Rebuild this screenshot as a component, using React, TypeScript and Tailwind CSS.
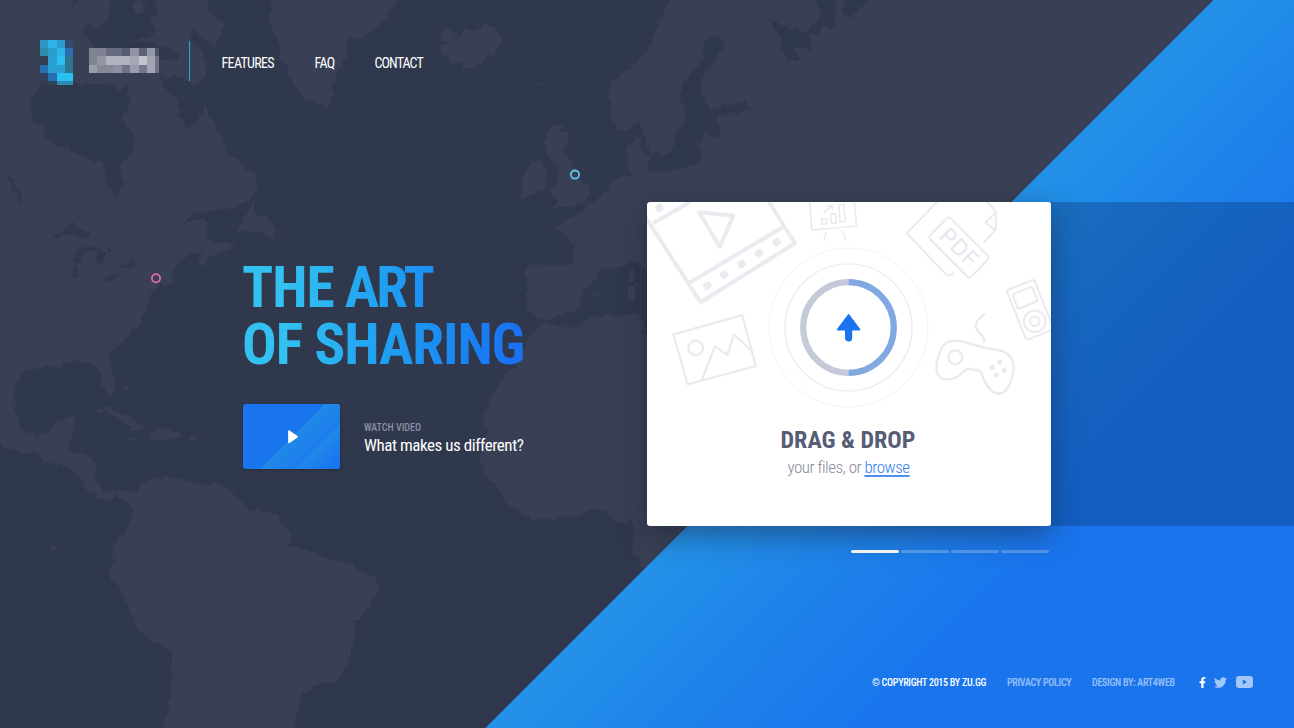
import React from "react";
import { FaFacebookF, FaTwitter } from "react-icons/fa";

const LOGO_MARK: string[][] = [
  ["#2d96c3", "#2bb4e8", "#2c9aca", "#304a70"],
  ["#2d8bae", "#2c9bce", "#2bb4e8", "#2a6fae"],
  ["#323c55", "#2c9fd4", "#2bc0f2", "#2d7592"],
  ["#276fab", "#2c9fd4", "#2c9fd4", "#2d7592"],
  ["#31415f", "#276fb2", "#2bc0f2", "#2bc0f2"],
  ["#323a51", "#31455f", "#2d8cae", "#2d8cae"],
];

const LOGO_WORD: string[][] = [
  ["#7e8293", "#7e8293", "#666b7f", "#666b7f", "#565b70", "#8f93a2", "#5c6176", "#9599a7", "#4c5268"],
  ["#7e8293", "#9296a5", "#b0b3be", "#b0b3be", "#b0b3be", "#a5a8b4", "#c3c6ce", "#a0a4b0", "#6f7487"],
  ["#9a9eac", "#858998", "#858998", "#8d91a0", "#6f7487", "#9a9eac", "#747a8c", "#a3a7b3", "#6f7487"],
];

const COASTS = [
  // North and Central America
  "M-20,-20 L110,-20 L109,18 L98,27 L84,25 L80,32 L92,40 L110,46 L128,40 L150,38 L156,30 L150,25 L158,12 L155,-20 L196,-20 L212,14 L224,24 L222,34 L214,47 L206,42 L198,34 L190,29 L192,40 L202,52 L207,66 L204,78 L196,86 L188,80 L176,76 L160,78 L162,86 L170,96 L178,98 L179,116 L188,128 L198,120 L205,106 L212,120 L222,136 L224,150 L240,163 L256,176 L258,190 L250,200 L235,209 L210,210 L195,213 L180,225 L204,217 L208,230 L206,238 L214,242 L226,243 L236,242 L228,250 L212,256 L202,265 L196,260 L206,252 L192,254 L175,265 L172,275 L175,281 L165,285 L152,289 L149,302 L142,315 L138,325 L125,340 L110,352 L109,362 L115,380 L115,393 L110,396 L102,385 L98,368 L88,362 L62,363 L61,370 L45,366 L25,370 L17,380 L14,395 L15,412 L22,430 L35,436 L50,432 L55,421 L76,418 L72,435 L67,451 L85,453 L97,462 L95,480 L105,492 L120,489 L132,493 L136,497 L128,502 L116,494 L110,502 L100,498 L84,487 L82,480 L70,467 L45,462 L34,452 L25,453 L-20,439 Z",
  // Newfoundland
  "M256,197 L244,217 L236,230 L250,233 L262,231 L273,241 L275,228 L266,216 L253,213 Z",
  // Cuba, Hispaniola, Jamaica, Puerto Rico
  "M90,416 L98,410 L108,407 L120,413 L135,421 L148,428 L134,430 L120,420 L105,411 Z",
  "M150,432 L160,428 L172,430 L184,437 L170,439 L152,438 Z",
  "M125,437 L138,438 L132,441 Z M189,437 L200,438 L190,440 Z",
  "M121,386 L129,385 L131,390 Z M137,396 L143,402 L137,400 Z",
  // South America
  "M133,495 L141,484 L162,477 L175,478 L190,483 L205,485 L215,483 L228,488 L240,500 L248,510 L270,511 L283,522 L292,540 L288,545 L300,548 L318,555 L330,561 L350,563 L367,575 L376,577 L378,590 L370,605 L355,622 L353,645 L345,668 L335,681 L320,683 L300,697 L298,715 L286,745 L160,745 L170,700 L172,670 L172,653 L155,642 L140,632 L130,610 L120,590 L110,575 L109,568 L118,560 L111,557 L113,545 L120,538 L130,525 L132,510 L127,498 Z",
  "M50,544 L58,548 L50,551 Z",
  // Greenland
  "M274,-20 L269,22 L278,38 L283,60 L292,82 L305,99 L318,102 L325,110 L332,103 L334,80 L345,58 L347,40 L364,36 L382,24 L390,10 L416,-20 Z",
  // Arctic islands
  "M132,5 L142,0 L146,8 L138,15 L133,12 Z",
  // Iceland
  "M438,38 L446,27 L456,33 L456,40 L464,30 L475,31 L487,25 L496,28 L501,42 L492,55 L471,68 L450,60 L440,48 L450,44 Z",
  "M537,82 L541,83 L540,87 Z M571,102 L574,104 L572,110 Z",
  // Great Britain and Ireland
  "M556,125 L563,125 L560,132 L570,134 L569,142 L563,150 L572,162 L576,176 L589,185 L590,193 L586,203 L570,206 L549,210 L560,200 L551,192 L558,180 L560,168 L555,165 L547,155 L544,140 L548,130 Z",
  "M536,160 L544,163 L546,176 L544,190 L535,193 L522,198 L522,178 L527,166 Z",
  // Europe and Russia
  "M680,-20 L660,20 L650,45 L635,65 L613,80 L609,95 L612,120 L620,131 L630,129 L640,120 L644,135 L650,153 L662,155 L672,150 L676,133 L685,122 L686,112 L680,102 L682,85 L690,72 L703,60 L705,40 L715,35 L725,42 L720,55 L705,72 L701,85 L703,100 L712,109 L728,105 L745,102 L750,108 L735,113 L717,115 L720,140 L713,138 L705,132 L700,145 L702,162 L690,167 L670,171 L655,172 L645,170 L650,158 L640,152 L642,138 L634,140 L626,150 L628,165 L632,175 L610,180 L603,195 L590,203 L580,213 L570,217 L565,222 L552,225 L560,232 L568,236 L573,248 L573,264 L560,266 L530,264 L525,270 L528,285 L526,305 L532,313 L548,320 L560,315 L577,310 L582,290 L595,280 L600,268 L615,270 L633,260 L644,268 L660,280 L1100,280 L1290,-20 Z",
  "M628,270 L634,270 L635,280 L630,281 Z M628,284 L636,284 L635,300 L628,301 Z M594,295 L600,292 L600,297 Z",
  // Africa
  "M535,331 L543,323 L552,326 L575,327 L590,318 L610,315 L640,314 L644,322 L642,332 L660,345 L720,345 L720,610 L650,575 L632,552 L634,530 L632,520 L620,522 L612,520 L605,510 L590,510 L575,517 L560,517 L537,521 L520,513 L505,502 L500,490 L485,475 L480,460 L486,435 L482,418 L495,390 L505,375 L520,362 L526,342 Z",
];

const WATERS = [
  // Hudson Bay and James Bay
  "M42,84 L62,82 L90,84 L112,84 L120,92 L127,84 L130,100 L123,120 L134,136 L133,152 L120,165 L123,185 L116,199 L105,182 L103,163 L85,158 L65,148 L46,141 L43,125 L32,122 L31,100 Z",
  "M84,28 L96,33 L120,40 L150,42 L180,54 L176,62 L140,56 L96,50 Z",
  "M68,-10 L78,-10 L75,12 Z",
  // Great Lakes
  "M52,238 L66,228 L74,222 L80,229 L88,233 L88,240 L72,234 Z",
  "M74,258 L78,248 L92,246 L100,250 L84,252 L78,262 L77,278 L72,278 Z",
  "M98,248 L105,254 L104,266 L96,262 Z M108,246 L114,252 L108,254 Z",
  "M98,281 L110,276 L120,272 L112,280 Z M120,265 L136,262 L134,266 L122,268 Z",
  "M7,176 L14,180 L20,192 L21,204 L14,194 Z",
  // White Sea and Barents coast
  "M766,16 L784,27 L806,31 L818,22 L819,8 L808,-20 L836,-20 L835,30 L824,27 L810,38 L814,52 L802,48 L792,43 L800,62 L790,60 L782,53 L781,37 Z",
  "M848,-20 L843,8 L844,17 L852,20 L858,11 L895,-20 Z",
];

function WorldBackdrop() {
  return (
    <svg className="absolute inset-0 h-full w-full" viewBox="0 0 1294 728" aria-hidden="true">
      <defs>
        <filter id="coast" x="-20" y="-20" width="1334" height="768" filterUnits="userSpaceOnUse" colorInterpolationFilters="sRGB">
          <feTurbulence type="fractalNoise" baseFrequency="0.14" numOctaves="3" seed="7" result="n" />
          <feDisplacementMap in="SourceGraphic" in2="n" scale="8" xChannelSelector="R" yChannelSelector="G" />
        </filter>
        <linearGradient id="slope" gradientUnits="userSpaceOnUse" x1="850" y1="363" x2="1040" y2="553">
          <stop offset="0" stopColor="#2392e8" />
          <stop offset="0.5" stopColor="#1e82ea" />
          <stop offset="1" stopColor="#1a75ed" />
        </linearGradient>
      </defs>
      <g filter="url(#coast)">
        {COASTS.map((d) => (
          <path key={d} d={d} fill="#394055" />
        ))}
        {WATERS.map((d) => (
          <path key={d} d={d} fill="#30384d" />
        ))}
      </g>
      <path d="M1213.5,0 L1294,0 L1294,728 L485.5,728 Z" fill="url(#slope)" />
      <circle cx="575" cy="174.6" r="4.1" fill="none" stroke="#61c5f0" strokeWidth="1.8" />
      <circle cx="156" cy="278.3" r="4.1" fill="none" stroke="#e36db0" strokeWidth="1.8" />
    </svg>
  );
}

function Logo() {
  return (
    <div className="flex items-start">
      <div className="flex h-[45px] w-[33px] flex-col">
        {LOGO_MARK.map((row, r) => (
          <div key={r} className={r === 5 ? "flex h-1" : "flex h-[8.2px]"}>
            {row.map((c, i) => (
              <span key={i} className="h-full flex-1" style={{ backgroundColor: c }} />
            ))}
          </div>
        ))}
      </div>
      <div className="mt-2 ml-4 flex h-[25px] w-[70px] flex-col">
        {LOGO_WORD.map((row, r) => (
          <div key={r} className="flex flex-1">
            {row.map((c, i) => (
              <span key={i} className={i === 8 ? "h-full w-1" : "h-full flex-1"} style={{ backgroundColor: c }} />
            ))}
          </div>
        ))}
      </div>
    </div>
  );
}

function Header() {
  return (
    <header className="flex h-[202px] items-start pt-10 pl-10">
      <Logo />
      <div className="mt-[1px] ml-[30px] h-10 w-px shrink-0 bg-[#22a7e0]" />
      <nav className="mt-[13px] ml-[31.5px] flex text-[14px] leading-5 tracking-[-0.65px] text-white">
        <a className="w-[93px]">FEATURES</a>
        <a className="w-[60px]">FAQ</a>
        <a className="tracking-[-0.9px]">CONTACT</a>
      </nav>
    </header>
  );
}

function VideoThumb() {
  return (
    <div className="h-[65px] w-[97px] overflow-hidden rounded-[3px] shadow-[0_1px_3px_rgba(30,30,40,0.5)]">
      <svg className="block" width="97" height="65" viewBox="0 0 97 65">
        <defs>
          <linearGradient id="band" gradientUnits="userSpaceOnUse" x1="50" y1="32" x2="72" y2="54">
            <stop offset="0" stopColor="#218ae8" />
            <stop offset="1" stopColor="#1b79ed" />
          </linearGradient>
          <linearGradient id="band2" gradientUnits="userSpaceOnUse" x1="74" y1="42" x2="92" y2="60">
            <stop offset="0" stopColor="#218ae8" />
            <stop offset="1" stopColor="#1a75ee" />
          </linearGradient>
        </defs>
        <rect width="97" height="65" fill="#1a74ee" />
        <path d="M17,65 L82,0 H97 V20 L52,65 Z" fill="url(#band)" />
        <path d="M52,65 L97,20 V65 Z" fill="url(#band2)" />
        <path d="M46,27.2 L54,32.7 L46,38.2 Z" fill="#fff" stroke="#fff" strokeWidth="1.8" strokeLinejoin="round" />
      </svg>
    </div>
  );
}

function Hero() {
  return (
    <section className="w-[647px] shrink-0 pt-[57px] pl-[242px]">
      <h1 className="w-[285px] bg-linear-to-r from-[#32c1f0] from-15% to-[#1a72f2] to-95% bg-clip-text text-[57.6px] leading-[57px] font-bold tracking-[-1.1px] whitespace-nowrap text-transparent">
        THE <span className="-ml-px tracking-[-3px]">ART</span>
        <br />
        OF SHARING
      </h1>
      <div className="mt-[31px] ml-px flex">
        <VideoThumb />
        <div className="ml-6 pt-[18px] whitespace-nowrap">
          <p className="text-[10px] leading-3 font-medium text-[#8b90a2]">WATCH VIDEO</p>
          <p className="mt-[1px] text-[17px] leading-5 tracking-[-0.46px] text-white">What makes us different?</p>
        </div>
      </div>
    </section>
  );
}

function CardArt() {
  const holes = [
    [12.3, 5.7],
    [60.3, 83.7],
    [77.3, 72.7],
    [94.7, 62],
    [112, 51.3],
    [129.7, 40.3],
  ];
  return (
    <svg className="block" width="404" height="222" viewBox="0 0 404 222" fill="none">
      <g stroke="#e9ebf0" strokeLinecap="round" strokeLinejoin="round">
        <g strokeWidth="4">
          <path d="M-12,-1 L53.7,100.3 L148,41.3 L122,0" />
          <path d="M43,80.5 L135.7,25.3 M6,21.3 L43,0" strokeLinecap="butt" />
          <path d="M52,10.3 L86.3,13.7 L73,44.7 Z" />
        </g>
        {holes.map(([x, y]) => (
          <rect key={x} x={x - 4} y={y - 3.7} width="8" height="7.4" rx="2.6" fill="#e9ebf0" stroke="none" transform={`rotate(-31 ${x} ${y})`} />
        ))}
        <g strokeWidth="1.6">
          <path d="M162.8,-4 L164.7,28 L209.7,24 L207,-4" />
          <path d="M178.7,30.5 L177.3,38 M195.7,29 L198.4,37" />
          <rect x="174.7" y="17" width="5" height="5" transform="rotate(-4 177 19)" />
          <rect x="184" y="12" width="5" height="9.2" transform="rotate(-4 186 16)" />
          <rect x="192.5" y="2.5" width="5" height="17.5" transform="rotate(-4 195 11)" />
          <path d="M177.3,10.7 L185,3.8 M180,3.6 L185.3,3.6 L185.3,8" />
        </g>
        <g strokeWidth="2.3">
          <path d="M26.3,132.3 L95.3,113.2 L108.7,164 L40.7,182.3 Z" />
          <circle cx="48.7" cy="146" r="7.3" />
          <path d="M54.7,178 L68,144.3 L80.3,153 L87,132.6 L105,149" />
        </g>
        <g strokeWidth="2.1">
          <path d="M290,0 L259.7,31.3 L299.5,72.8 Q301.5,74.5 303.5,73 L307,71.2" />
          <path d="M339.5,-1 L348.8,9.7 V27.6 L337,40.3 M347.7,11.5 L338.4,20.5 L347.7,28" />
          <path d="M304,16.5 L340.5,53.5 Q342.5,55.7 340.3,58 L324.5,74.5 Q322.3,76.5 320.2,74.3 L283.3,37.3 Q281.5,35.2 283.5,33 L299.5,16.5 Q302,14.3 304,16.5 Z" />
          <rect x="-14.8" y="-26.8" width="29.6" height="53.6" rx="2.5" transform="translate(383.2 107.8) rotate(-21.8)" />
          <rect x="-10.6" y="-7.8" width="21.2" height="15.6" rx="2" transform="translate(378 95.8) rotate(-21.8)" />
          <circle cx="387.7" cy="119.3" r="10.8" />
          <circle cx="387.7" cy="119.3" r="4.8" />
        </g>
        <g strokeWidth="2.4">
          <path d="M303,139.3 C294,141 289,158 289.6,168 C290,177.5 300,179 308,176 C314,173.5 318,166.6 322,166.6 C326,168.4 331,167.6 334,169.6 C336,178 342,191 352,191.8 C362,191 367,173 366.4,163 C366,153 357,148.8 350,147.8 C340,147 330,144 321,141 C315,138.5 308,138.5 303,139.3 Z" />
          <circle cx="308.3" cy="155.3" r="7" />
          <path d="M337.3,140 C337,131 328.5,131 328.8,123 C329,119.5 333,115.5 337.3,112.5" />
        </g>
        <g fill="#e9ebf0" stroke="none">
          <circle cx="345.3" cy="165.3" r="2.6" />
          <circle cx="352.7" cy="160.3" r="2.6" />
          <circle cx="349.3" cy="173" r="2.6" />
          <circle cx="357.3" cy="168.3" r="2.6" />
        </g>
      </g>
      <text x="0.5" y="7.8" textAnchor="middle" fill="#e4e7ed" className="font-['Inter',sans-serif] text-[22px] font-normal tracking-[0.6px] [font-stretch:100%]" transform="translate(312 45.3) rotate(45)">
        PDF
      </text>
      <circle cx="201.5" cy="125.5" r="79.5" stroke="#f3f4f6" />
      <circle cx="201.5" cy="125.5" r="63.5" stroke="#e9eaee" strokeWidth="1.2" />
      <path d="M201.5,80.2 A45.3,45.3 0 0 0 201.5,170.8" stroke="#c4cad8" strokeWidth="6.2" />
      <path d="M201.5,80.2 A45.3,45.3 0 0 1 201.5,170.8" stroke="#82a8e1" strokeWidth="6.2" />
      <path d="M201.6,113 L212.4,127.6 H204.3 V136 A2.7,2.7 0 0 1 198.9,136 V127.6 H190.8 Z" fill="#1a73ee" stroke="#1a73ee" strokeWidth="1.8" strokeLinejoin="round" />
    </svg>
  );
}

function DropCard() {
  return (
    <div className="h-[323.5px] w-[404px] shrink-0 overflow-hidden rounded-[3px] bg-white text-center shadow-[0_8px_30px_rgba(25,29,48,0.5)]">
      <CardArt />
      <h2 className="pr-[2px] text-[24px] leading-[33px] font-bold text-[#565d75]">DRAG &amp; DROP</h2>
      <p className="pr-px text-[17px] leading-[21px] font-light tracking-[-0.5px] text-[#858a9b]">
        your files, or{" "}
        <a className="text-[#2f7eee] underline decoration-[#4a90f2] decoration-[1.5px] underline-offset-[2px]">browse</a>
      </p>
    </div>
  );
}

function Pager() {
  return (
    <div className="flex gap-[2px] pt-[24.5px] pl-[851px]">
      <span className="h-[3px] w-12 rounded-full bg-white" />
      <span className="h-[3px] w-12 rounded-full bg-white/25" />
      <span className="h-[3px] w-12 rounded-full bg-white/25" />
      <span className="h-[3px] w-12 rounded-full bg-white/25" />
    </div>
  );
}

function Footer() {
  return (
    <footer className="mt-auto flex h-[52px] items-start pl-[872px] text-[10px] leading-[13px] font-medium tracking-[-0.27px] whitespace-nowrap text-white/55">
      <span className="w-[135px] text-white">© COPYRIGHT 2015 BY ZU.GG</span>
      <a className="w-[85px]">PRIVACY POLICY</a>
      <a className="w-[107px]">DESIGN BY: ART4WEB</a>
      <FaFacebookF className="mt-[1px] h-[11px] w-[7px] text-white" />
      <FaTwitter className="ml-[7px] h-[13px] w-[15px] text-white/60" />
      <svg className="ml-[8px]" width="17" height="12" viewBox="0 0 17 12">
        <path fillRule="evenodd" d="M3,0 H14 Q17,0 17,3 V9 Q17,12 14,12 H3 Q0,12 0,9 V3 Q0,0 3,0 Z M6.8,3.6 V8.6 L11,6.1 Z" fill="#fff" fillOpacity="0.6" />
      </svg>
    </footer>
  );
}

export default function App() {
  return (
    <div className="relative h-[728px] w-[1294px] overflow-hidden bg-[#30384d] font-['Roboto_Condensed','Roboto',sans-serif] [font-stretch:75%]">
      <WorldBackdrop />
      <div className="relative flex h-full flex-col">
        <Header />
        <main className="flex h-[323.5px]">
          <Hero />
          <div className="relative flex flex-1">
            <DropCard />
            <div className="flex-1 bg-[#0a3070]/35" />
          </div>
        </main>
        <Pager />
        <Footer />
      </div>
    </div>
  );
}
